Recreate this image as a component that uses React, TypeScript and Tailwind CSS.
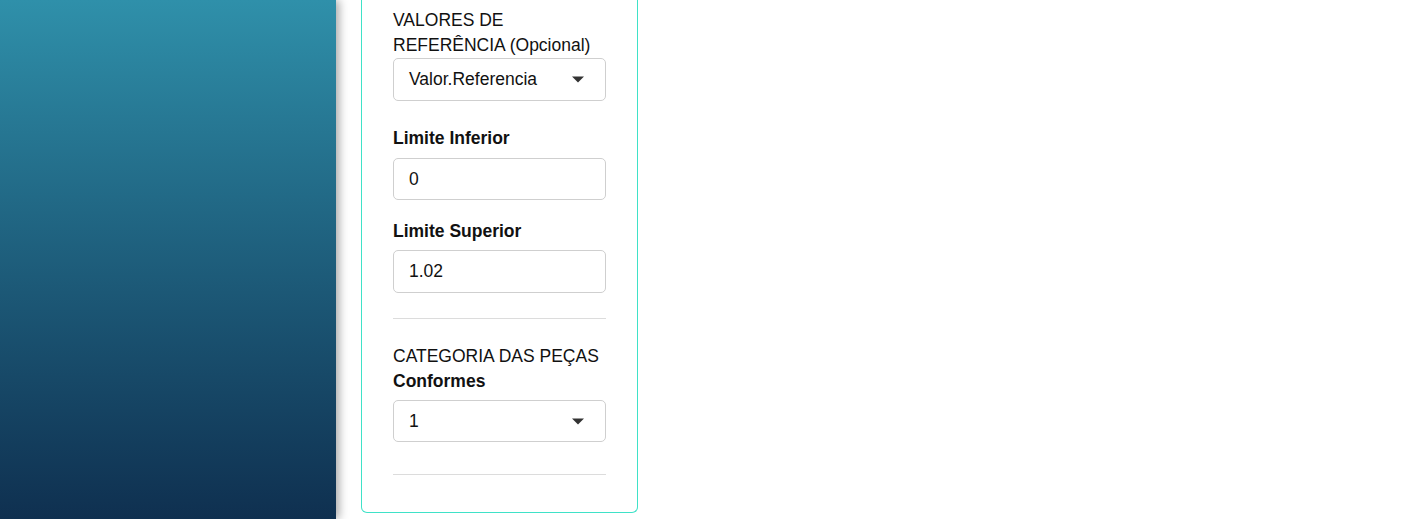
export default function App() {
  return (
    <div className="flex h-[519px] w-full overflow-hidden bg-white font-['Liberation_Sans',Arial,sans-serif] text-[17.5px] leading-[25px] text-[#111]">
      <aside className="relative z-10 h-full w-[336px] shrink-0 bg-gradient-to-b from-[#2f90aa] to-[#0f3050] shadow-[3px_0_9px_rgba(0,0,0,0.35)]" />
      <main className="flex-1">
        <div className="ml-[25px] flex w-[277px] flex-col rounded-b-[6px] border border-t-0 border-[#3fe2c8] px-[31px] pt-[8px] pb-[37px]">
          <label>
            VALORES DE
            <br />
            REFERÊNCIA (Opcional)
          </label>
          <SelectBox value="Valor.Referencia" className="h-[43px]" />

          <label className="mt-[25px] font-bold">Limite Inferior</label>
          <InputBox value="0" className="mt-[7px] h-[42px]" />

          <label className="mt-[19px] font-bold">Limite Superior</label>
          <InputBox value="1.02" className="mt-[6px] h-[43px]" />

          <hr className="mt-[25px] border-t border-[#dcdcdc]" />

          <label className="mt-[25px]">
            CATEGORIA DAS PEÇAS
            <br />
            <span className="font-bold">Conformes</span>
          </label>
          <SelectBox value="1" className="mt-[6px] h-[42px]" />

          <hr className="mt-[32px] border-t border-[#dcdcdc]" />
        </div>
      </main>
    </div>
  );
}

function SelectBox({ value, className }: { value: string; className?: string }) {
  return (
    <div
      className={`flex items-center justify-between rounded-[5px] border border-[#cfcfcf] pl-[15px] pr-[21px] ${className}`}
    >
      <span>{value}</span>
      <svg width="12" height="7" viewBox="0 0 12 7" className="fill-[#333]">
        <path d="M0 0.5h12L6 6.5z" />
      </svg>
    </div>
  );
}

function InputBox({ value, className }: { value: string; className?: string }) {
  return (
    <div className={`flex items-center rounded-[5px] border border-[#cfcfcf] pl-[15px] ${className}`}>
      {value}
    </div>
  );
}
